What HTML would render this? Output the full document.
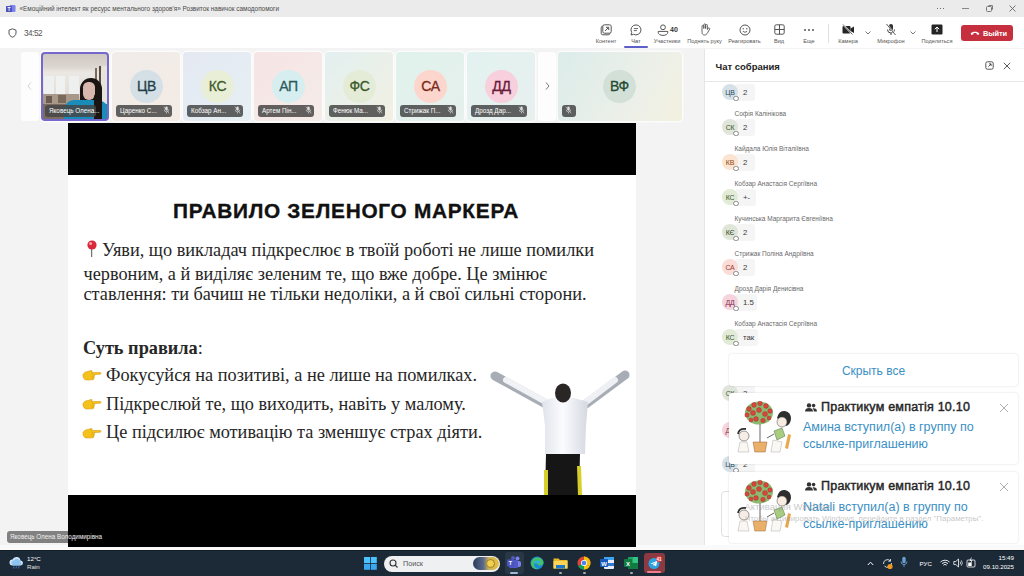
<!DOCTYPE html>
<html><head><meta charset="utf-8">
<style>
*{margin:0;padding:0;box-sizing:border-box}
html,body{width:1024px;height:576px;overflow:hidden;background:#f3f3f3;font-family:"Liberation Sans",sans-serif;position:relative}
.a{position:absolute}
#titlebar{left:0;top:0;width:1024px;height:17px;background:#ebebeb}
#toolbar{left:0;top:17px;width:1024px;height:31px;background:#fff}
#stage{left:0;top:48px;width:704px;height:500px;background:#f3f3f3}
#chat{left:704px;top:48.5px;width:320px;height:499px;background:#fff;border-left:1px solid #e6e6e6}
#white{left:0;top:545px;width:1024px;height:6px;background:#fafafa}
#taskbar{left:0;top:550px;width:1024px;height:26px;background:#1c2a37;border-top:1px solid #131d27}
.tt{font-size:7px;color:#4a4a4a;white-space:nowrap}
.tb{text-align:center;font-size:5.6px;color:#555;white-space:nowrap}
.tile{border-radius:4px;overflow:hidden;box-shadow:0 0 0 1.5px #fbfbfc}
.av{border-radius:50%;text-align:center;font-size:14px;letter-spacing:-0.3px;-webkit-text-stroke:0.3px currentColor;line-height:33px;width:33px;height:33px}
.lbl{height:12px;border-radius:3px;background:rgba(40,40,40,0.72);color:#fff;font-size:6.3px;line-height:12px;padding-left:4px;white-space:nowrap}
.cav{width:16px;height:16px;border-radius:50%;font-size:7px;letter-spacing:-0.2px;line-height:17.5px;text-align:center}
.bub{background:#f5f5f5;border-radius:3px;height:17px;font-size:7.8px;line-height:17px;color:#3a3a3a;padding-left:8px}
.cname{font-size:6.5px;color:#6a6a6a;white-space:nowrap}
.serif{font-family:"Liberation Serif",serif;color:#262626;white-space:nowrap}
</style></head><body>
<div id="titlebar" class="a"></div>
<div id="toolbar" class="a"></div>
<div id="stage" class="a"></div>
<div id="chat" class="a"></div>
<div id="white" class="a"></div>
<div id="taskbar" class="a"></div>

<!-- title bar -->
<svg class="a" style="left:6px;top:5px" width="10" height="8" viewBox="0 0 10 8"><rect x="3.5" y="0" width="6" height="7" rx="1.2" fill="#7b83eb"/><rect x="0" y="1" width="6" height="6" rx="0.6" fill="#4b53bc"/><text x="3" y="5.8" font-size="5" fill="#fff" text-anchor="middle" font-family="Liberation Sans" font-weight="bold">T</text></svg>
<div class="a tt" id="m_title" style="left:19.5px;top:4.5px;font-size:6.4px">«Емоційний інтелект як ресурс ментального здоров'я» Розвиток навичок самодопомоги</div>
<div class="a" style="left:936.5px;top:7.5px;width:1.6px;height:1.6px;background:#444;border-radius:50%"></div>
<div class="a" style="left:939.5px;top:7.5px;width:1.6px;height:1.6px;background:#444;border-radius:50%"></div><div class="a" style="left:942.5px;top:7.5px;width:1.6px;height:1.6px;background:#444;border-radius:50%"></div>
<div class="a" style="left:961.5px;top:8px;width:7px;height:1px;background:#888"></div>
<div class="a" style="left:986px;top:6px;width:5.5px;height:5.5px;border:1px solid #777;border-radius:1.5px"></div><div class="a" style="left:987.5px;top:4.5px;width:5.5px;height:5.5px;border-top:1px solid #777;border-right:1px solid #777;border-radius:1.5px"></div>
<svg class="a" style="left:1008px;top:4px" width="9" height="9" viewBox="0 0 9 9"><path d="M1.5 1.5L7.5 7.5M7.5 1.5L1.5 7.5" stroke="#666" stroke-width="0.9"/></svg>

<!-- toolbar left -->
<svg class="a" style="left:8px;top:28px" width="9" height="10" viewBox="0 0 9 10"><path d="M4.5 0.8L1 2.2V5c0 2 1.6 3.6 3.5 4.2C6.4 8.6 8 7 8 5V2.2z" fill="none" stroke="#424242" stroke-width="0.9"/></svg>
<div class="a" id="m_time" style="left:24px;top:29px;font-size:8.2px;letter-spacing:-0.5px;color:#555">34:52</div>


<!-- toolbar right -->
<svg class="a" style="left:600px;top:24px" width="12" height="12" viewBox="0 0 12 12"><rect x="1.2" y="2.2" width="8.6" height="8.6" rx="1.6" fill="none" stroke="#555" stroke-width="1"/><rect x="2.8" y="0.8" width="8.4" height="8.4" rx="1.6" fill="#fff" stroke="#555" stroke-width="1"/><path d="M5 7L8.6 3.4M6 3.3h2.7v2.7" fill="none" stroke="#555" stroke-width="1"/></svg>
<div class="a tb" id="m_t1" style="left:586px;top:38px;width:40px">Контент</div>
<svg class="a" style="left:630px;top:24px" width="12" height="12" viewBox="0 0 12 12"><path d="M6 0.9a5 5 0 1 1-2.4 9.4L1 11l0.7-2.5A5 5 0 0 1 6 0.9z" fill="none" stroke="#555" stroke-width="1"/><path d="M3.8 4.6h4.2M3.8 6.6h3" stroke="#555" stroke-width="0.9"/></svg>
<div class="a tb" id="m_t2" style="left:616px;top:38px;width:40px;color:#444">Чат</div>
<div class="a" style="left:624px;top:46px;width:24px;height:2px;background:#5b5fc7;border-radius:1px"></div>
<svg class="a" style="left:657px;top:24px" width="12" height="12" viewBox="0 0 12 12"><circle cx="6" cy="3.3" r="2.4" fill="none" stroke="#555" stroke-width="1"/><path d="M1.2 7.4h9.6v0.8c0 2-2.2 3.2-4.8 3.2S1.2 10.2 1.2 8.2z" fill="none" stroke="#555" stroke-width="1"/></svg>
<div class="a" id="m_t40" style="left:670px;top:25.5px;font-size:7px;font-weight:bold;color:#333">40</div>
<div class="a tb" id="m_t3" style="left:647px;top:38px;width:40px">Участники</div>
<svg class="a" style="left:699px;top:23px" width="12" height="13" viewBox="0 0 12 13"><path d="M3 6V3.2a0.9 0.9 0 0 1 1.8 0V5.5V1.8a0.9 0.9 0 0 1 1.8 0v3.7V2.4a0.9 0.9 0 0 1 1.8 0V6.5l0.8-1.4a0.9 0.9 0 0 1 1.5 0.9L8.6 9.8C7.9 11.2 6.8 12 5.4 12C3.9 12 3 10.8 3 9.2z" fill="none" stroke="#555" stroke-width="0.9"/></svg>
<div class="a tb" id="m_t4" style="left:682px;top:38px;width:45px">Поднять руку</div>
<svg class="a" style="left:739px;top:24px" width="12" height="12" viewBox="0 0 12 12"><circle cx="6" cy="6" r="5" fill="none" stroke="#555" stroke-width="1"/><circle cx="4.2" cy="4.8" r="0.7" fill="#555"/><circle cx="7.8" cy="4.8" r="0.7" fill="#555"/><path d="M3.8 7.3q2.2 2 4.4 0" fill="none" stroke="#555" stroke-width="0.9"/></svg>
<div class="a tb" id="m_t5" style="left:722px;top:38px;width:45px">Реагировать</div>
<svg class="a" style="left:774px;top:24px" width="11" height="11" viewBox="0 0 11 11"><rect x="0.8" y="0.8" width="9.4" height="9.4" rx="1.4" fill="none" stroke="#555" stroke-width="1"/><path d="M5.5 0.8v9.4M0.8 5.5h9.4" stroke="#555" stroke-width="1"/></svg>
<div class="a tb" id="m_t6" style="left:759px;top:38px;width:40px">Вид</div>
<div class="a" style="left:804px;top:29px;width:2px;height:2px;background:#555;border-radius:1px"></div>
<div class="a" style="left:808px;top:29px;width:2px;height:2px;background:#555;border-radius:1px"></div>
<div class="a" style="left:812px;top:29px;width:2px;height:2px;background:#555;border-radius:1px"></div>
<div class="a tb" id="m_t7" style="left:789px;top:38px;width:40px">Еще</div>
<div class="a" style="left:828px;top:24px;width:1px;height:19px;background:#e0e0e0"></div>
<svg class="a" style="left:842px;top:24px" width="13" height="11" viewBox="0 0 13 11"><rect x="0.5" y="2" width="8" height="7.5" rx="1" fill="#242424"/><path d="M8.5 4.5L12 2.5v6.5L8.5 7z" fill="#242424"/><path d="M1 0.5L10.5 10.5" stroke="#fff" stroke-width="1.6"/><path d="M1 0.5L10.5 10.5" stroke="#242424" stroke-width="0.7"/></svg>
<div class="a tb" id="m_t8" style="left:828px;top:38px;width:40px">Камера</div>
<svg class="a" style="left:865px;top:31px" width="6" height="4" viewBox="0 0 6 4"><path d="M0.5 0.5L3 3L5.5 0.5" fill="none" stroke="#555" stroke-width="0.8"/></svg>
<svg class="a" style="left:885px;top:23px" width="12" height="13" viewBox="0 0 12 13"><rect x="4" y="1" width="4" height="7" rx="2" fill="#333"/><path d="M2.5 6.5a3.5 3.5 0 0 0 7 0M6 10v2" fill="none" stroke="#333" stroke-width="0.9"/><path d="M1.5 1L10.5 12" stroke="#fff" stroke-width="1.6"/><path d="M1.5 1L10.5 12" stroke="#333" stroke-width="0.8"/></svg>
<div class="a tb" id="m_t9" style="left:871px;top:38px;width:40px">Микрофон</div>
<svg class="a" style="left:910px;top:31px" width="6" height="4" viewBox="0 0 6 4"><path d="M0.5 0.5L3 3L5.5 0.5" fill="none" stroke="#555" stroke-width="0.8"/></svg>
<svg class="a" style="left:931px;top:24px" width="12" height="11" viewBox="0 0 12 11"><rect x="0.5" y="0.5" width="11" height="10" rx="1.2" fill="#242424"/><path d="M6 8V3M3.8 5.2L6 3l2.2 2.2" fill="none" stroke="#fff" stroke-width="1"/></svg>
<div class="a tb" id="m_t10" style="left:914px;top:38px;width:46px">Поделиться</div>
<div class="a" style="left:961px;top:25px;width:52px;height:16px;background:#c6303e;border-radius:3px"></div>
<svg class="a" style="left:970px;top:30px" width="10" height="6" viewBox="0 0 10 6"><path d="M0.6 3.6C2.5 1.2 7.5 1.2 9.4 3.6L8.4 5L6.6 4.2V3.2C5.6 2.8 4.4 2.8 3.4 3.2V4.2L1.6 5z" fill="#fff"/></svg>
<div class="a" id="m_t11" style="left:983px;top:28.5px;font-size:7.4px;letter-spacing:-0.1px;font-weight:bold;color:#fff">Выйти</div>


<!-- tile strip -->
<div class="a" style="left:21px;top:52px;width:18px;height:69px;background:#fdfdfd;border-radius:3px"></div>
<svg class="a" style="left:27px;top:82px" width="5" height="8" viewBox="0 0 5 8"><path d="M4 0.5L1 4L4 7.5" fill="none" stroke="#c8c8c8" stroke-width="0.8"/></svg>
<div class="a" style="left:538px;top:52px;width:18px;height:69px;background:#fdfdfd;border-radius:3px"></div>
<svg class="a" style="left:545px;top:82px" width="5" height="8" viewBox="0 0 5 8"><path d="M1 0.5L4 4L1 7.5" fill="none" stroke="#555" stroke-width="0.8"/></svg>

<!-- video tile -->
<div class="a tile" style="left:41px;top:52px;width:68px;height:69px;border:2px solid #7468cc;border-radius:4px;background:linear-gradient(180deg,#cfc8c2 0%,#dcd6d0 20%,#ebe7e2 28%,#e4dfda 60%,#b8aa9a 75%,#8a7a6a 100%)">
  <div class="a" style="left:1px;top:22px;width:10px;height:19px;background:#eef0f0"></div>
  <div class="a" style="left:13px;top:22px;width:9px;height:19px;background:#f0f2f2"></div>
  <div class="a" style="left:26px;top:22px;width:10px;height:19px;background:#eef0f0"></div>
  <div class="a" style="left:0px;top:40px;width:36px;height:10px;background:#a89888"></div>
  <div class="a" style="left:3px;top:42px;width:6px;height:7px;background:#6a5a50"></div>
  <div class="a" style="left:15px;top:41px;width:8px;height:8px;background:#7a6a5c"></div>
  <div class="a" style="left:52px;top:14px;width:2px;height:40px;background:#7a6a5a"></div>
  <div class="a" style="left:56px;top:12px;width:2px;height:44px;background:#5a4a3e"></div>
  <div class="a" style="left:59px;top:12px;width:7px;height:44px;background:#e6e2dc"></div>
  <div class="a" style="left:0px;top:50px;width:64px;height:17px;background:#7c6c5e"></div>
  <div class="a" style="left:37px;top:24px;width:22px;height:43px;background:#1a1412;border-radius:11px 11px 3px 3px"></div>
  <div class="a" style="left:40px;top:28px;width:12px;height:18px;background:#d8b8ae;border-radius:6px 6px 7px 7px"></div>
  <div class="a" style="left:21px;top:46px;width:45px;height:21px;background:#1a8cba;border-radius:10px 12px 0 0"></div>
  <div class="a" style="left:51px;top:40px;width:8px;height:27px;background:#1a1412;border-radius:3px"></div>
</div>
<div class="a lbl" id="m_n1" style="left:45px;top:104.5px;width:51px;background:rgba(70,70,70,0.85)">Яковець Олена...</div>
<div class="a tile" style="left:112px;top:52px;width:68px;height:69px;background:linear-gradient(135deg,#f1ecea,#f3ebe4)"></div>
<div class="a av" id="m_av0" style="left:130px;top:70px;background:#d4e0e5;color:#1f3f4a">ЦВ</div>
<div class="a lbl" id="m_n2" style="left:116px;top:104.5px;width:56px">Царенко С...</div>
<svg class="a" style="left:163px;top:106px" width="7" height="8" viewBox="0 0 7 8"><rect x="2.3" y="0.5" width="2.4" height="4" rx="1.2" fill="#ddd"/><path d="M1.2 3.6a2.3 2.3 0 0 0 4.6 0M3.5 6v1.5" fill="none" stroke="#ddd" stroke-width="0.6"/><path d="M0.8 0.6L6.2 7.4" stroke="#ddd" stroke-width="0.6"/></svg>
<div class="a tile" style="left:183px;top:52px;width:68px;height:69px;background:linear-gradient(135deg,#e4e8f2,#e6f0f4)"></div>
<div class="a av" id="m_av1" style="left:201px;top:70px;background:#e9efd6;color:#3f5a2a">КС</div>
<div class="a lbl" id="m_n3" style="left:187px;top:104.5px;width:56px">Кобзар Ан...</div>
<svg class="a" style="left:234px;top:106px" width="7" height="8" viewBox="0 0 7 8"><rect x="2.3" y="0.5" width="2.4" height="4" rx="1.2" fill="#ddd"/><path d="M1.2 3.6a2.3 2.3 0 0 0 4.6 0M3.5 6v1.5" fill="none" stroke="#ddd" stroke-width="0.6"/><path d="M0.8 0.6L6.2 7.4" stroke="#ddd" stroke-width="0.6"/></svg>
<div class="a tile" style="left:254px;top:52px;width:68px;height:69px;background:linear-gradient(135deg,#f6e4e4,#f4ece8)"></div>
<div class="a av" id="m_av2" style="left:272px;top:70px;background:#d6eef0;color:#2a5a5a">АП</div>
<div class="a lbl" id="m_n4" style="left:258px;top:104.5px;width:56px">Артем Пін...</div>
<svg class="a" style="left:305px;top:106px" width="7" height="8" viewBox="0 0 7 8"><rect x="2.3" y="0.5" width="2.4" height="4" rx="1.2" fill="#ddd"/><path d="M1.2 3.6a2.3 2.3 0 0 0 4.6 0M3.5 6v1.5" fill="none" stroke="#ddd" stroke-width="0.6"/><path d="M0.8 0.6L6.2 7.4" stroke="#ddd" stroke-width="0.6"/></svg>
<div class="a tile" style="left:325px;top:52px;width:68px;height:69px;background:linear-gradient(135deg,#e2f0f0,#f2f0e2)"></div>
<div class="a av" id="m_av3" style="left:343px;top:70px;background:#e4ecd8;color:#3a5a2a">ФС</div>
<div class="a lbl" id="m_n5" style="left:329px;top:104.5px;width:56px">Фенюк Ма...</div>
<svg class="a" style="left:376px;top:106px" width="7" height="8" viewBox="0 0 7 8"><rect x="2.3" y="0.5" width="2.4" height="4" rx="1.2" fill="#ddd"/><path d="M1.2 3.6a2.3 2.3 0 0 0 4.6 0M3.5 6v1.5" fill="none" stroke="#ddd" stroke-width="0.6"/><path d="M0.8 0.6L6.2 7.4" stroke="#ddd" stroke-width="0.6"/></svg>
<div class="a tile" style="left:396px;top:52px;width:68px;height:69px;background:linear-gradient(135deg,#e0f2ec,#e6f0ec)"></div>
<div class="a av" id="m_av4" style="left:414px;top:70px;background:#fcd6cc;color:#7a2a1a">СА</div>
<div class="a lbl" id="m_n6" style="left:400px;top:104.5px;width:56px">Стрижак П...</div>
<svg class="a" style="left:447px;top:106px" width="7" height="8" viewBox="0 0 7 8"><rect x="2.3" y="0.5" width="2.4" height="4" rx="1.2" fill="#ddd"/><path d="M1.2 3.6a2.3 2.3 0 0 0 4.6 0M3.5 6v1.5" fill="none" stroke="#ddd" stroke-width="0.6"/><path d="M0.8 0.6L6.2 7.4" stroke="#ddd" stroke-width="0.6"/></svg>
<div class="a tile" style="left:467px;top:52px;width:68px;height:69px;background:linear-gradient(135deg,#e2f2f0,#e8f0ee)"></div>
<div class="a av" id="m_av5" style="left:485px;top:70px;background:#f8cfdc;color:#6a1a3a">ДД</div>
<div class="a lbl" id="m_n7" style="left:471px;top:104.5px;width:56px">Дрозд Дар...</div>
<svg class="a" style="left:518px;top:106px" width="7" height="8" viewBox="0 0 7 8"><rect x="2.3" y="0.5" width="2.4" height="4" rx="1.2" fill="#ddd"/><path d="M1.2 3.6a2.3 2.3 0 0 0 4.6 0M3.5 6v1.5" fill="none" stroke="#ddd" stroke-width="0.6"/><path d="M0.8 0.6L6.2 7.4" stroke="#ddd" stroke-width="0.6"/></svg>
<div class="a tile" style="left:558px;top:52px;width:124px;height:69px;background:linear-gradient(120deg,#dcecea,#eef0e8 70%,#f2f0de)"></div>
<div class="a av" id="m_av7" style="left:603px;top:70px;background:#d2e0d8;color:#1f4a2f">ВФ</div>
<div class="a lbl" style="left:562px;top:104.5px;width:14px;padding:0"></div>
<svg class="a" style="left:565px;top:106px" width="7" height="8" viewBox="0 0 7 8"><rect x="2.3" y="0.5" width="2.4" height="4" rx="1.2" fill="#ddd"/><path d="M1.2 3.6a2.3 2.3 0 0 0 4.6 0M3.5 6v1.5" fill="none" stroke="#ddd" stroke-width="0.6"/><path d="M0.8 0.6L6.2 7.4" stroke="#ddd" stroke-width="0.6"/></svg>


<!-- slide -->
<div class="a" style="left:68px;top:123px;width:568px;height:52px;background:#000"></div>
<div class="a" style="left:68px;top:175px;width:568px;height:320px;background:#fff"></div>
<div class="a" style="left:68px;top:495px;width:568px;height:52px;background:#000"></div>
<div class="a" id="m_s0" style="left:173px;top:198.5px;font-size:20.8px;letter-spacing:0.73px;-webkit-text-stroke:0.35px #111;font-weight:bold;color:#111;white-space:nowrap">ПРАВИЛО ЗЕЛЕНОГО МАРКЕРА</div>
<div class="a serif" id="m_s1" style="left:102px;top:240px;font-size:18.3px">Уяви, що викладач підкреслює в твоїй роботі не лише помилки</div>
<div class="a serif" id="m_s2" style="left:83.5px;top:263.5px;font-size:18.3px">червоним, а й виділяє зеленим те, що вже добре. Це змінює</div>
<div class="a serif" id="m_s3" style="left:83.5px;top:284.3px;font-size:18.3px">ставлення: ти бачиш не тільки недоліки, а й свої сильні сторони.</div>
<div class="a serif" id="m_s4" style="left:83px;top:337.5px;font-size:18.3px"><b>Суть правила</b>:</div>
<div class="a serif" id="m_s5" style="left:106px;top:365px;font-size:18.3px">Фокусуйся на позитиві, а не лише на помилках.</div>
<div class="a serif" id="m_s6" style="left:106px;top:394px;font-size:18.3px">Підкреслюй те, що виходить, навіть у малому.</div>
<div class="a serif" id="m_s7" style="left:106px;top:422px;font-size:18.3px">Це підсилює мотивацію та зменшує страх діяти.</div>


<svg class="a" style="left:86px;top:240px" width="12" height="18" viewBox="0 0 12 18"><path d="M5.6 8L5.6 17" stroke="#777" stroke-width="1.3"/><circle cx="6" cy="5" r="4.6" fill="#d8283a"/><circle cx="4.6" cy="3.6" r="1.5" fill="#f7a0a8"/></svg>
<svg class="a" style="left:82px;top:369px" width="20" height="12" viewBox="0 0 20 12"><path d="M1 5.5C2 3.5 4 2.5 6 2.5L9 1.5C10 1.2 10.6 2 10 2.8L9 3.6L18 3.4C19.2 3.4 19.4 5 18.2 5.2L12 5.6C12.8 6 12.8 7.2 12 7.6C12.6 8 12.4 9.2 11.6 9.4C12 9.8 11.6 10.8 10.8 10.8L5 11C2.6 11 0.6 9 1 5.5z" fill="#f4c21a" stroke="#d69a10" stroke-width="0.6"/><path d="M9.5 5.6L12 5.6M9.5 7.6L12 7.6M9.5 9.4L11.6 9.4" stroke="#d69a10" stroke-width="0.5"/></svg>
<svg class="a" style="left:82px;top:398px" width="20" height="12" viewBox="0 0 20 12"><path d="M1 5.5C2 3.5 4 2.5 6 2.5L9 1.5C10 1.2 10.6 2 10 2.8L9 3.6L18 3.4C19.2 3.4 19.4 5 18.2 5.2L12 5.6C12.8 6 12.8 7.2 12 7.6C12.6 8 12.4 9.2 11.6 9.4C12 9.8 11.6 10.8 10.8 10.8L5 11C2.6 11 0.6 9 1 5.5z" fill="#f4c21a" stroke="#d69a10" stroke-width="0.6"/><path d="M9.5 5.6L12 5.6M9.5 7.6L12 7.6M9.5 9.4L11.6 9.4" stroke="#d69a10" stroke-width="0.5"/></svg>
<svg class="a" style="left:82px;top:427px" width="20" height="12" viewBox="0 0 20 12"><path d="M1 5.5C2 3.5 4 2.5 6 2.5L9 1.5C10 1.2 10.6 2 10 2.8L9 3.6L18 3.4C19.2 3.4 19.4 5 18.2 5.2L12 5.6C12.8 6 12.8 7.2 12 7.6C12.6 8 12.4 9.2 11.6 9.4C12 9.8 11.6 10.8 10.8 10.8L5 11C2.6 11 0.6 9 1 5.5z" fill="#f4c21a" stroke="#d69a10" stroke-width="0.6"/><path d="M9.5 5.6L12 5.6M9.5 7.6L12 7.6M9.5 9.4L11.6 9.4" stroke="#d69a10" stroke-width="0.5"/></svg>

<svg class="a" style="left:490px;top:366px" width="142" height="130" viewBox="0 0 142 130">
  <defs><linearGradient id="shirt" x1="0" x2="1"><stop offset="0" stop-color="#dfe3ea"/><stop offset="0.45" stop-color="#fbfcff"/><stop offset="1" stop-color="#d4d8e0"/></linearGradient></defs>
  <path d="M5 10L56 38" stroke="#a8acb4" stroke-width="9" stroke-linecap="round"/>
  <path d="M16 14L56 36" stroke="#f0f2f5" stroke-width="6" stroke-linecap="round"/>
  <path d="M135 9L96 38" stroke="#a8acb4" stroke-width="9" stroke-linecap="round"/>
  <path d="M125 14L96 36" stroke="#eef0f4" stroke-width="6" stroke-linecap="round"/>
  <path d="M52 36L62 32L84 32L98 36L96 60L95 88L55 88L55 60z" fill="url(#shirt)"/>
  <path d="M56 88L90 88L89 129L55 129z" fill="#161616"/>
  <path d="M54 104L58 104L58 129L54 129z" fill="#d6cf2a"/>
  <path d="M87 100L91 100L92 129L88 129z" fill="#d6cf2a"/>
  <ellipse cx="73" cy="27" rx="8" ry="9.5" fill="#2a2626"/>
</svg>


<!-- chat panel -->
<div class="a" id="m_c0" style="left:715.5px;top:60.5px;font-size:9.5px;font-weight:bold;color:#242424;white-space:nowrap">Чат собрания</div>
<svg class="a" style="left:985px;top:61px" width="9" height="9" viewBox="0 0 9 9"><rect x="0.8" y="0.8" width="7.4" height="7.4" rx="1.6" fill="none" stroke="#444" stroke-width="0.9"/><path d="M3.4 5.6L6 3M4 2.9h2.1V5" fill="none" stroke="#444" stroke-width="0.9"/></svg>
<svg class="a" style="left:1003px;top:62px" width="8" height="8" viewBox="0 0 8 8"><path d="M0.8 0.8L7.2 7.2M7.2 0.8L0.8 7.2" stroke="#444" stroke-width="0.9"/></svg>
<div class="a" style="left:705px;top:81px;width:319px;height:1px;background:#e6e6e6"></div>
<div class="a bub" style="left:735px;top:83.5px;width:20px">2</div>
<div class="a cav" id="m_ca0" style="left:722px;top:84px;background:#d6e1e7;color:#2b4a5a">ЦВ</div>
<div class="a" style="left:733px;top:95.5px;width:5.5px;height:5.5px;border-radius:50%;background:#fff;border:0.7px solid #8a8a8a"></div>
<div class="a cname" id="m_cn1" style="left:734.5px;top:110px">Софія Калінікова</div>
<div class="a bub" style="left:735px;top:118.5px;width:20px">2</div>
<div class="a cav" id="m_ca1" style="left:722px;top:119px;background:#dfe5da;color:#3c5a2a">СК</div>
<div class="a" style="left:733px;top:130.5px;width:5.5px;height:5.5px;border-radius:50%;background:#fff;border:0.7px solid #8a8a8a"></div>
<div class="a cname" id="m_cn2" style="left:734.5px;top:145px">Кайдала Юлія Віталіївна</div>
<div class="a bub" style="left:735px;top:153.5px;width:20px">2</div>
<div class="a cav" id="m_ca2" style="left:722px;top:154px;background:#fce4d0;color:#8a4a1a">КВ</div>
<div class="a" style="left:733px;top:165.5px;width:5.5px;height:5.5px;border-radius:50%;background:#fff;border:0.7px solid #8a8a8a"></div>
<div class="a cname" id="m_cn3" style="left:734.5px;top:180px">Кобзар Анастасія Сергіївна</div>
<div class="a bub" style="left:735px;top:188.5px;width:21px">+-</div>
<div class="a cav" id="m_ca3" style="left:722px;top:189px;background:#e2ebd8;color:#3a5a2a">КС</div>
<div class="a" style="left:733px;top:200.5px;width:5.5px;height:5.5px;border-radius:50%;background:#fff;border:0.7px solid #8a8a8a"></div>
<div class="a cname" id="m_cn4" style="left:734.5px;top:215px">Кучинська Маргарита Євгеніївна</div>
<div class="a bub" style="left:735px;top:223.5px;width:20px">2</div>
<div class="a cav" id="m_ca4" style="left:722px;top:224px;background:#dfe6d8;color:#3a4a2a">КЄ</div>
<div class="a" style="left:733px;top:235.5px;width:5.5px;height:5.5px;border-radius:50%;background:#fff;border:0.7px solid #8a8a8a"></div>
<div class="a cname" id="m_cn5" style="left:734.5px;top:250px">Стрижак Поліна Андріївна</div>
<div class="a bub" style="left:735px;top:258.5px;width:20px">2</div>
<div class="a cav" id="m_ca5" style="left:722px;top:259px;background:#fadcd8;color:#9a3a2a">СА</div>
<div class="a" style="left:733px;top:270.5px;width:5.5px;height:5.5px;border-radius:50%;background:#fff;border:0.7px solid #8a8a8a"></div>
<div class="a cname" id="m_cn6" style="left:734.5px;top:285px">Дрозд Дарія Денисівна</div>
<div class="a bub" style="left:735px;top:293.5px;width:22px">1.5</div>
<div class="a cav" id="m_ca6" style="left:722px;top:294px;background:#f6d4de;color:#7a2a4a">ДД</div>
<div class="a" style="left:733px;top:305.5px;width:5.5px;height:5.5px;border-radius:50%;background:#fff;border:0.7px solid #8a8a8a"></div>
<div class="a cname" id="m_cn7" style="left:734.5px;top:320px">Кобзар Анастасія Сергіївна</div>
<div class="a bub" style="left:735px;top:328.5px;width:23px">так</div>
<div class="a cav" id="m_ca7" style="left:722px;top:329px;background:#e2ebd8;color:#3a5a2a">КС</div>
<div class="a" style="left:733px;top:340.5px;width:5.5px;height:5.5px;border-radius:50%;background:#fff;border:0.7px solid #8a8a8a"></div>

<div class="a bub" style="left:735px;top:384.5px;width:20px">2</div>
<div class="a cav" id="m_ca9" style="left:722px;top:385px;background:#dfe5da;color:#3c5a2a">СК</div>
<div class="a" style="left:733px;top:396.5px;width:5.5px;height:5.5px;border-radius:50%;background:#fff;border:0.7px solid #8a8a8a"></div>
<div class="a cname" id="m_cn10" style="left:734.5px;top:413px">Дрозд Дарія Денисівна</div>
<div class="a bub" style="left:735px;top:421.5px;width:20px">2</div>
<div class="a cav" id="m_ca10" style="left:722px;top:422px;background:#f6d4de;color:#7a2a4a">ДД</div>
<div class="a" style="left:733px;top:433.5px;width:5.5px;height:5.5px;border-radius:50%;background:#fff;border:0.7px solid #8a8a8a"></div>
<div class="a cname" id="m_cn11" style="left:734.5px;top:448px">Царенко Вероніка</div>
<div class="a bub" style="left:735px;top:455.5px;width:20px">2</div>
<div class="a cav" id="m_ca11" style="left:722px;top:456px;background:#d6e1e7;color:#2b4a5a">ЦВ</div>
<div class="a" style="left:733px;top:467.5px;width:5.5px;height:5.5px;border-radius:50%;background:#fff;border:0.7px solid #8a8a8a"></div>
<div class="a" style="left:721px;top:491px;width:292px;height:46px;border:1px solid #e0e0e0;border-radius:4px;background:#fff"></div>

<div class="a" style="left:729px;top:354px;width:289px;height:32px;background:#fff;border-radius:3px;box-shadow:0 0 2px rgba(0,0,0,0.18)"></div>
<div class="a" id="m_hide" style="left:729px;top:364px;width:289px;text-align:center;font-size:12px;color:#3a8fc4">Скрыть все</div>
<div class="a" style="left:729px;top:393px;width:289px;height:71px;background:#fff;border-radius:3px;box-shadow:0 0 2px rgba(0,0,0,0.18)"></div>
<svg class="a" style="left:805px;top:403px" width="12" height="9" viewBox="0 0 12 9"><circle cx="4" cy="2.4" r="2.2" fill="#333"/><path d="M0 8.5C0 6 1.8 5 4 5s4 1 4 3.5z" fill="#333"/><circle cx="8.6" cy="2.6" r="1.8" fill="#333"/><path d="M8.8 8.5H12C12 6.4 10.6 5.3 8.6 5.3C8.2 5.3 7.8 5.4 7.5 5.5C8.4 6.2 8.8 7.2 8.8 8.5z" fill="#333"/></svg>
<div class="a" id="m_nt0" style="left:821px;top:400px;font-size:12.5px;color:#262626;-webkit-text-stroke:0.45px #262626;letter-spacing:0.22px;white-space:nowrap">Практикум емпатія 10.10</div>
<svg class="a" style="left:999px;top:403px" width="10" height="10" viewBox="0 0 10 10"><path d="M1 1L9 9M9 1L1 9" stroke="#b0b0b0" stroke-width="1"/></svg>
<div class="a" id="m_nl0" style="left:803px;top:419px;font-size:12.5px;color:#3a8fc4;line-height:16.5px;white-space:nowrap">Амина вступил(а) в группу по<br>ссылке-приглашению</div>
<div class="a" style="left:729px;top:472px;width:289px;height:71px;background:#fff;border-radius:3px;box-shadow:0 0 2px rgba(0,0,0,0.18)"></div>
<svg class="a" style="left:805px;top:482px" width="12" height="9" viewBox="0 0 12 9"><circle cx="4" cy="2.4" r="2.2" fill="#333"/><path d="M0 8.5C0 6 1.8 5 4 5s4 1 4 3.5z" fill="#333"/><circle cx="8.6" cy="2.6" r="1.8" fill="#333"/><path d="M8.8 8.5H12C12 6.4 10.6 5.3 8.6 5.3C8.2 5.3 7.8 5.4 7.5 5.5C8.4 6.2 8.8 7.2 8.8 8.5z" fill="#333"/></svg>
<div class="a" id="m_nt1" style="left:821px;top:479px;font-size:12.5px;color:#262626;-webkit-text-stroke:0.45px #262626;letter-spacing:0.22px;white-space:nowrap">Практикум емпатія 10.10</div>
<svg class="a" style="left:999px;top:482px" width="10" height="10" viewBox="0 0 10 10"><path d="M1 1L9 9M9 1L1 9" stroke="#b0b0b0" stroke-width="1"/></svg>
<div class="a" id="m_nl1" style="left:803px;top:499px;font-size:12.5px;color:#3a8fc4;line-height:16.5px;white-space:nowrap">Natali вступил(а) в группу по<br>ссылке-приглашению</div>

<svg class="a" style="left:733px;top:398px" width="60" height="58" viewBox="0 0 60 58">
<ellipse cx="26" cy="15" rx="14" ry="11.5" fill="#8cba70"/>
<g fill="#d8463c" stroke="#8a2a24" stroke-width="0.35"><circle cx="16" cy="11" r="2.4"/><circle cx="21" cy="7" r="2.4"/><circle cx="27" cy="5.5" r="2.3"/><circle cx="33" cy="8" r="2.4"/><circle cx="37" cy="13" r="2.3"/><circle cx="20" cy="15" r="2.5"/><circle cx="26" cy="12" r="2.5"/><circle cx="32" cy="16" r="2.5"/><circle cx="14" cy="17" r="2.2"/><circle cx="23" cy="21" r="2.4"/><circle cx="30" cy="22.5" r="2.3"/><circle cx="36" cy="20" r="2"/><circle cx="18" cy="22" r="2"/></g>
<path d="M27 26V45" stroke="#8a8a8a" stroke-width="1.3"/>
<path d="M20 44h14l-1.8 10h-10.4z" fill="#eab06a" stroke="#9a6a3a" stroke-width="0.5"/>
<path d="M44 20q2-8 8-7q6 1 6 8q-1 6-5 7z" fill="#2e2e2e"/>
<circle cx="49" cy="24" r="5" fill="#f8ece0" stroke="#444" stroke-width="0.5"/>
<path d="M41 33l8-3 3 8-8 4z" fill="#a8cc80" stroke="#4a6a3a" stroke-width="0.5"/>
<path d="M34 40l7-4" stroke="#555" stroke-width="0.9"/>
<path d="M55 36l3 1-3 14-3-1z" fill="#e8a850"/>
<circle cx="11" cy="38" r="5" fill="#f6eee6" stroke="#555" stroke-width="0.6"/>
<path d="M5 36q1-6 8-5" fill="none" stroke="#333" stroke-width="1.8"/>
<path d="M7 44l-2 10h11l-2-10z" fill="#faf6f2" stroke="#999" stroke-width="0.4"/>
<path d="M40 42l-2 12h9l2-10z" fill="#faf8f4" stroke="#999" stroke-width="0.4"/>
</svg>
<svg class="a" style="left:733px;top:477px" width="60" height="58" viewBox="0 0 60 58">
<ellipse cx="26" cy="15" rx="14" ry="11.5" fill="#8cba70"/>
<g fill="#d8463c" stroke="#8a2a24" stroke-width="0.35"><circle cx="16" cy="11" r="2.4"/><circle cx="21" cy="7" r="2.4"/><circle cx="27" cy="5.5" r="2.3"/><circle cx="33" cy="8" r="2.4"/><circle cx="37" cy="13" r="2.3"/><circle cx="20" cy="15" r="2.5"/><circle cx="26" cy="12" r="2.5"/><circle cx="32" cy="16" r="2.5"/><circle cx="14" cy="17" r="2.2"/><circle cx="23" cy="21" r="2.4"/><circle cx="30" cy="22.5" r="2.3"/><circle cx="36" cy="20" r="2"/><circle cx="18" cy="22" r="2"/></g>
<path d="M27 26V45" stroke="#8a8a8a" stroke-width="1.3"/>
<path d="M20 44h14l-1.8 10h-10.4z" fill="#eab06a" stroke="#9a6a3a" stroke-width="0.5"/>
<path d="M44 20q2-8 8-7q6 1 6 8q-1 6-5 7z" fill="#2e2e2e"/>
<circle cx="49" cy="24" r="5" fill="#f8ece0" stroke="#444" stroke-width="0.5"/>
<path d="M41 33l8-3 3 8-8 4z" fill="#a8cc80" stroke="#4a6a3a" stroke-width="0.5"/>
<path d="M34 40l7-4" stroke="#555" stroke-width="0.9"/>
<path d="M55 36l3 1-3 14-3-1z" fill="#e8a850"/>
<circle cx="11" cy="38" r="5" fill="#f6eee6" stroke="#555" stroke-width="0.6"/>
<path d="M5 36q1-6 8-5" fill="none" stroke="#333" stroke-width="1.8"/>
<path d="M7 44l-2 10h11l-2-10z" fill="#faf6f2" stroke="#999" stroke-width="0.4"/>
<path d="M40 42l-2 12h9l2-10z" fill="#faf8f4" stroke="#999" stroke-width="0.4"/>
</svg>



<!-- stage name label -->
<div class="a lbl" id="m_bn" style="left:7px;top:531px;width:100px;height:12px;background:rgba(0,0,0,0.47);font-size:6.3px;padding-left:3px;color:#f0f0f0">Яковець Олена Володимирівна</div>

<!-- taskbar -->
<svg class="a" style="left:9px;top:556px" width="15" height="13" viewBox="0 0 15 13"><path d="M3.5 9.5a3 3 0 0 1 0-6 4.2 4.2 0 0 1 8 1 2.5 2.5 0 0 1 0 5z" fill="#cfe4f8"/><path d="M3.8 9.2a2.4 2.4 0 0 1 1-4.6 3.6 3.6 0 0 1 6.6 1.2 2 2 0 0 1 0 3.4z" fill="#8cc4f0"/><path d="M5 10.5l-0.6 2M7.5 10.5l-0.6 2M10 10.5l-0.6 2" stroke="#3a78d8" stroke-width="1"/></svg>
<div class="a" id="m_w1" style="left:27px;top:554.5px;font-size:6.2px;color:#fff;white-space:nowrap">12°C</div>
<div class="a" id="m_w2" style="left:27px;top:562.5px;font-size:6.2px;color:#e0e0e0;white-space:nowrap">Rain</div>

<svg class="a" style="left:364px;top:557px" width="13" height="13" viewBox="0 0 13 13"><rect x="0" y="0" width="6" height="6" fill="#4cc2ff"/><rect x="6.8" y="0" width="6" height="6" fill="#4cc2ff"/><rect x="0" y="6.8" width="6" height="6" fill="#3aa8f0"/><rect x="6.8" y="6.8" width="6" height="6" fill="#3aa8f0"/></svg>
<div class="a" style="left:384px;top:555.5px;width:116px;height:16px;border-radius:8px;background:#eef0f2"></div>
<svg class="a" style="left:389px;top:559px" width="9" height="9" viewBox="0 0 9 9"><circle cx="4" cy="4" r="3" fill="none" stroke="#333" stroke-width="1.1"/><path d="M6.2 6.2L8.5 8.5" stroke="#333" stroke-width="1.2"/></svg>
<div class="a" id="m_srch" style="left:403px;top:558.5px;font-size:7.2px;color:#555">Поиск</div>
<div class="a" style="left:473px;top:557px;width:26px;height:13px;border-radius:7px;background:linear-gradient(90deg,#2a3a5a,#5a6a8a 40%,#c8b060 60%,#e8c040)"></div>
<div class="a" style="left:486px;top:559px;width:9px;height:9px;border-radius:50%;background:#f0d050;border:1px solid #a08020"></div>

<div class="a" style="left:505px;top:552px;width:19px;height:22px;border-radius:3px;background:#2a3846"></div>
<svg class="a" style="left:507px;top:556px" width="14" height="13" viewBox="0 0 14 13"><circle cx="10.5" cy="2.5" r="2" fill="#7b83eb"/><rect x="8" y="5" width="6" height="6" rx="2" fill="#7b83eb"/><circle cx="6" cy="2" r="2" fill="#5059c9"/><rect x="2" y="4" width="9" height="8" rx="1.5" fill="#5059c9"/><rect x="0" y="3.5" width="7" height="7" rx="0.8" fill="#4b53bc"/><text x="3.5" y="9" font-size="5.5" fill="#fff" text-anchor="middle" font-family="Liberation Sans" font-weight="bold">T</text></svg>
<div class="a" style="left:510px;top:571.5px;width:8px;height:2px;border-radius:1px;background:#9fb8d8"></div>

<svg class="a" style="left:530px;top:556px" width="14" height="14" viewBox="0 0 14 14"><circle cx="7" cy="7" r="6.5" fill="#1a8ad8"/><path d="M1 8C1 4 4 1.5 7.5 1.5C11 1.5 13.5 4 13.5 6.5C13.5 8.5 12 9.5 10 9.5C8 9.5 7 8.5 7.5 7.5H4C3.5 10 5.5 12.5 8.5 12.5C6 13.8 1.5 12.5 1 8z" fill="#45c06a"/><path d="M4 7.5C4.5 5 6.5 4 8.5 4.5C10 5 10.5 6.5 9.5 7z" fill="#2ab0e8"/></svg>
<svg class="a" style="left:553px;top:557px" width="15" height="12" viewBox="0 0 15 12"><path d="M0.5 1.5h5l1.5 1.5h7.5v8.5h-14z" fill="#e8b828"/><path d="M0.5 4h14v7.5h-14z" fill="#fcd45a"/><rect x="3" y="8" width="9" height="3.5" fill="#1a78c8"/></svg>
<div class="a" style="left:559px;top:572px;width:3px;height:1.5px;background:#aaa;border-radius:1px"></div>
<svg class="a" style="left:577px;top:556px" width="14" height="14" viewBox="0 0 14 14"><circle cx="7" cy="7" r="6.5" fill="#db4437"/><path d="M7 7L1.4 10.25A6.5 6.5 0 0 0 7 13.5z" fill="#0f9d58"/><path d="M7 0.5A6.5 6.5 0 0 1 12.6 10.25L7 7z" fill="#f4c20d"/><path d="M1.4 10.25A6.5 6.5 0 0 0 12.6 10.25L7 7z" fill="#0f9d58"/><path d="M12.6 10.25A6.5 6.5 0 0 1 7 13.5L7 7z" fill="#f4c20d"/><circle cx="7" cy="7" r="3" fill="#fff"/><circle cx="7" cy="7" r="2.3" fill="#4285f4"/></svg>
<div class="a" style="left:582.5px;top:572px;width:3px;height:1.5px;background:#aaa;border-radius:1px"></div>
<svg class="a" style="left:600px;top:556px" width="14" height="14" viewBox="0 0 14 14"><rect x="4" y="1" width="10" height="12" rx="1" fill="#e8eef8"/><rect x="4" y="1" width="10" height="3" fill="#41a5ee"/><rect x="4" y="7" width="10" height="3" fill="#2b7cd3"/><rect x="0" y="3" width="8" height="8" rx="0.8" fill="#185abd"/><text x="4" y="9.5" font-size="6" fill="#fff" text-anchor="middle" font-family="Liberation Sans" font-weight="bold">W</text></svg>
<svg class="a" style="left:624px;top:556px" width="14" height="14" viewBox="0 0 14 14"><rect x="4" y="1" width="10" height="12" rx="1" fill="#21a366"/><rect x="9" y="1" width="5" height="12" fill="#33c481"/><rect x="4" y="7" width="10" height="6" fill="#107c41"/><rect x="0" y="3" width="8" height="8" rx="0.8" fill="#107c41"/><text x="4" y="9.5" font-size="6" fill="#fff" text-anchor="middle" font-family="Liberation Sans" font-weight="bold">X</text></svg>
<div class="a" style="left:629.5px;top:572px;width:3px;height:1.5px;background:#aaa;border-radius:1px"></div>
<div class="a" style="left:644px;top:552.5px;width:20.5px;height:20.5px;border-radius:3px;background:#8a3a40"></div>
<svg class="a" style="left:647px;top:556px" width="15" height="14" viewBox="0 0 15 14"><circle cx="7" cy="7.5" r="5.5" fill="#2aa3e0"/><path d="M3.8 7.4l6-2.4c0.3-0.1 0.5 0 0.4 0.4l-1 4.6c-0.1 0.3-0.3 0.4-0.6 0.2L7 9.1 6.1 9.9 6.2 8.5 9 6 5.6 8.1 4 7.7c-0.3-0.1-0.3-0.3-0.2-0.3z" fill="#fff"/><circle cx="12" cy="3" r="3" fill="#e03a3a"/><text x="12" y="4.9" font-size="4.5" fill="#fff" text-anchor="middle" font-family="Liberation Sans" font-weight="bold">41</text></svg>
<div class="a" style="left:647px;top:571px;width:14px;height:1.8px;background:#f08090;border-radius:1px"></div>

<svg class="a" style="left:867px;top:561px" width="7" height="5" viewBox="0 0 7 5"><path d="M0.8 4L3.5 1.2L6.2 4" fill="none" stroke="#fff" stroke-width="1"/></svg>
<svg class="a" style="left:881px;top:557px" width="13" height="13" viewBox="0 0 13 13"><path d="M2.5 7a4 4 0 0 1 7-3M10.5 6a4 4 0 0 1-7 3" fill="none" stroke="#d0d8e0" stroke-width="1"/><path d="M9.5 2v2.2H7.3" fill="none" stroke="#d0d8e0" stroke-width="1"/><circle cx="9" cy="9.5" r="2.6" fill="#f09820"/></svg>
<svg class="a" style="left:900px;top:556px" width="8" height="13" viewBox="0 0 8 13"><rect x="2.3" y="0.8" width="3.4" height="6.5" rx="1.7" fill="#6aa0d0"/><path d="M1 5.5a3 3 0 0 0 6 0M4 8.8V11" fill="none" stroke="#6aa0d0" stroke-width="0.9"/></svg>
<div class="a" id="m_rus" style="left:919.5px;top:559.5px;font-size:6.2px;color:#fff">РУС</div>
<svg class="a" style="left:940px;top:559px" width="10" height="8" viewBox="0 0 10 8"><path d="M0.5 3a6.5 6.5 0 0 1 9 0M2 4.6a4.3 4.3 0 0 1 6 0M3.4 6.2a2.2 2.2 0 0 1 3.2 0" fill="none" stroke="#fff" stroke-width="0.9"/></svg>
<svg class="a" style="left:953px;top:558px" width="10" height="10" viewBox="0 0 10 10"><path d="M0.8 3.5h2L5.5 1v8L2.8 6.5h-2z" fill="none" stroke="#fff" stroke-width="0.8"/><path d="M7 3.5q1.2 1.5 0 3M8.3 2.3q2 2.7 0 5.4" fill="none" stroke="#fff" stroke-width="0.7"/></svg>
<svg class="a" style="left:966px;top:557px" width="10" height="11" viewBox="0 0 10 11"><rect x="1" y="3" width="8" height="7" rx="1" fill="none" stroke="#fff" stroke-width="0.8"/><rect x="2.2" y="5.5" width="3.5" height="3.5" fill="#fff"/><path d="M5.5 0.5L4 3.5h2L4.5 6.5" fill="none" stroke="#fff" stroke-width="0.7"/></svg>
<div class="a" id="m_tm" style="left:990px;top:553.5px;width:24px;text-align:right;font-size:6.2px;color:#fff">15:49</div>
<div class="a" id="m_dt" style="left:980px;top:563px;width:34px;text-align:right;font-size:6.2px;color:#fff">09.10.2025</div>


<div class="a" id="m_wm1" style="left:744.5px;top:501px;font-size:9.5px;color:rgba(150,150,150,0.55);white-space:nowrap">Активация Windows</div>
<div class="a" id="m_wm2" style="left:745px;top:514px;font-size:7.9px;color:rgba(150,150,150,0.55);white-space:nowrap">Чтобы активировать Windows, перейдите в раздел "Параметры".</div>

</body></html>
